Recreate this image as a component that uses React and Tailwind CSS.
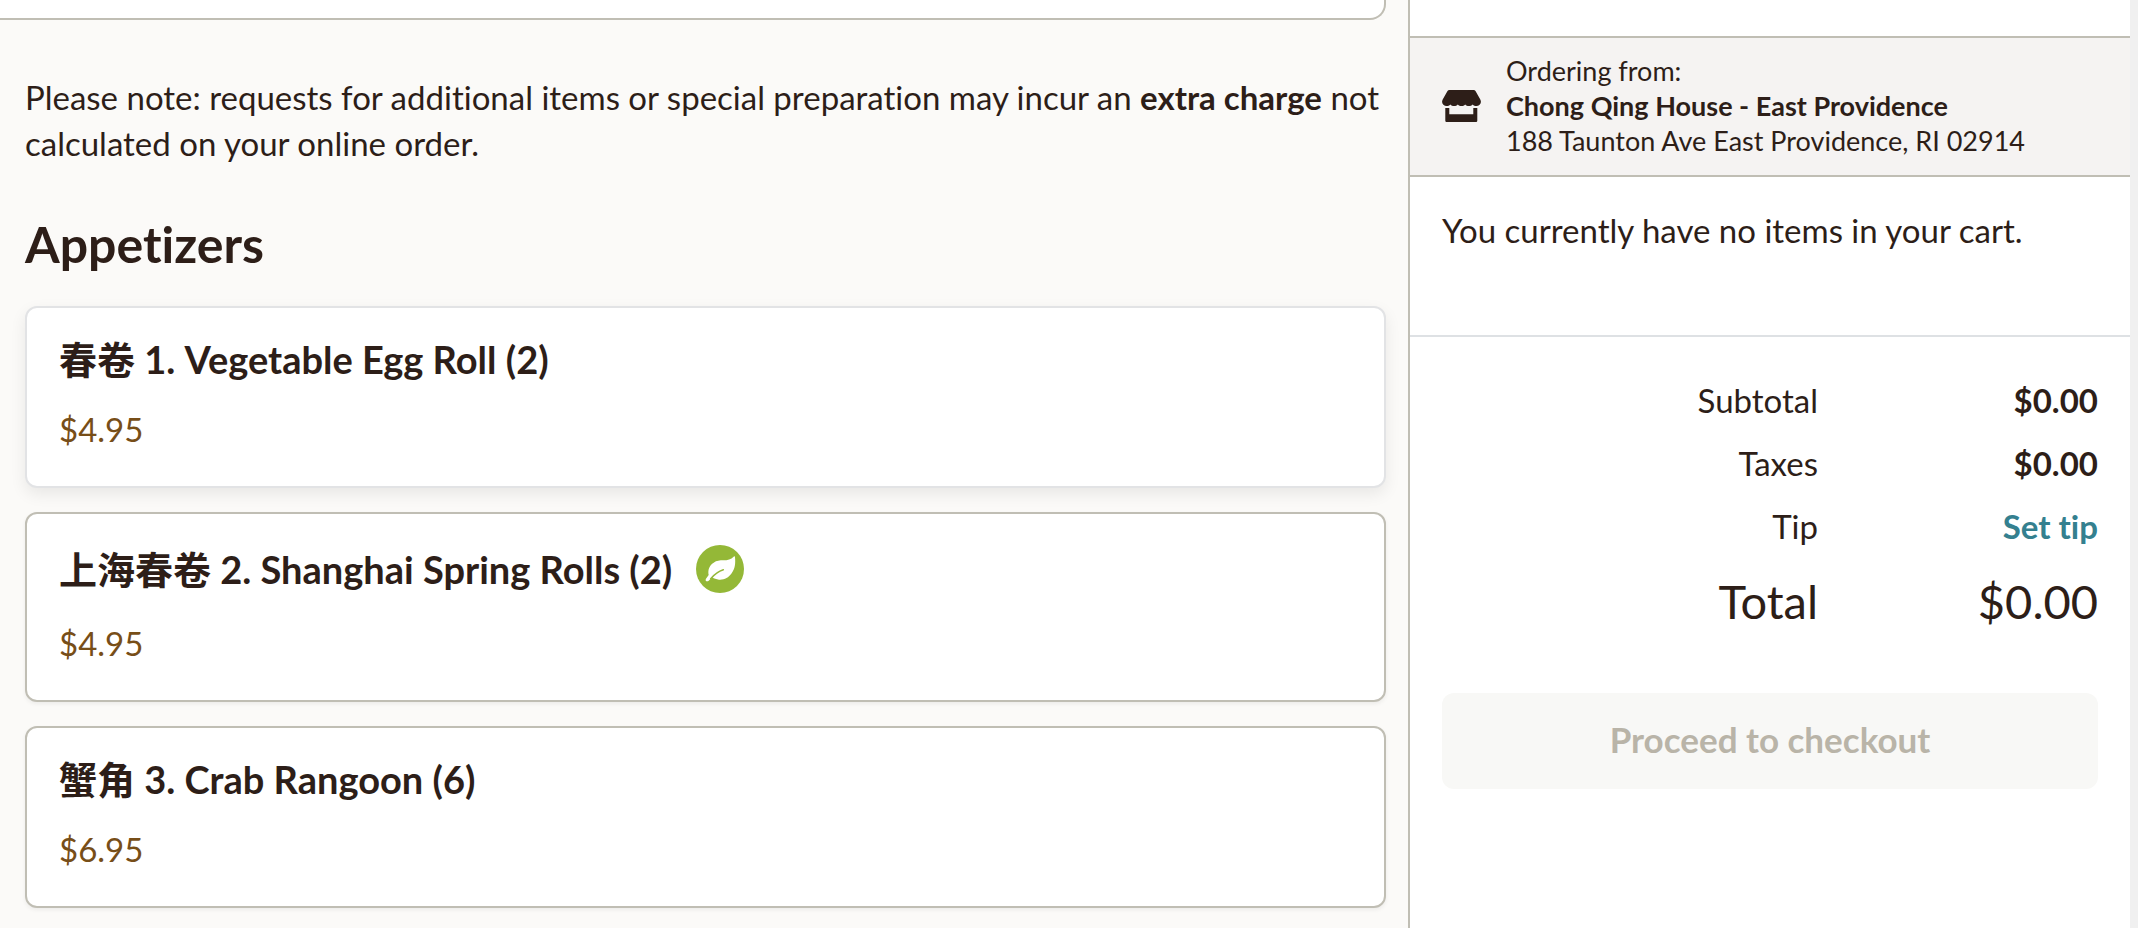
const items = [
  { name: "春卷 1. Vegetable Egg Roll (2)", price: "$4.95", active: true },
  { name: "上海春卷 2. Shanghai Spring Rolls (2)", price: "$4.95", vegetarian: true },
  { name: "蟹角 3. Crab Rangoon (6)", price: "$6.95" },
];

function StoreIcon() {
  return (
    <svg viewBox="0 0 39 32" className="h-8 w-[39px] shrink-0" fill="currentColor" aria-hidden="true">
      <path d="M7.4 0h24.200c.9 0 1.500.4 1.900 1.100l4.800 8.400c1.600 3-.1 6.100-3.300 6.400-1.900.1-3.300-.4-4.300-1.500-1.100 1.100-2.300 1.600-3.800 1.600s-2.700-.5-3.700-1.500c-1 1-2.200 1.500-3.700 1.500s-2.700-.5-3.700-1.500c-1 1-2.200 1.500-3.700 1.500s-2.700-.5-3.800-1.600c-1 1.100-2.400 1.600-4.300 1.500-3.200-.3-4.900-3.400-3.300-6.400l4.800-8.400C5.900.4 6.500 0 7.400 0z" />
      <path d="M3.300 18h4v6.300h24V18h4v12.400c0 1-.6 1.600-1.600 1.600H4.900c-1 0-1.600-.6-1.600-1.600z" />
    </svg>
  );
}

function LeafBadge() {
  return (
    <svg viewBox="0 0 144 144" className="my-[3px] size-12 shrink-0" role="img" aria-label="Vegetarian">
      <circle cx="72" cy="72" r="72" fill="#94b837" />
      <path
        d="M113 35c2-2 4-1 4 2 2 19 0 35-10 48-10 14-22 20-38 19-8-1-15-3-20-7l-11 10c-5 5-12 0-8-6l8-11c-3-16 2-29 15-37 9-6 18-7 29-7 13 0 23-3 31-11z"
        fill="#fff"
      />
      <path d="M44 101c11-13 22-22 38-27" fill="none" stroke="#94b837" strokeWidth="4.500" strokeLinecap="round" />
    </svg>
  );
}

function MenuItem({ item }) {
  const look = item.active
    ? "border-[#e2e3e5] shadow-[0_6px_16px_rgba(0,0,0,0.08)]"
    : "border-[#c0beb4] shadow-[0_2px_4px_rgba(0,0,0,0.06)]";
  return (
    <li>
      <button type="button" className={`block w-full rounded-xl border-2 bg-white px-8 pt-7 pb-[34px] text-left ${look}`}>
        <span className="flex items-center gap-6">
          <span className="text-[38px] leading-[46px] font-bold">{item.name}</span>
          {item.vegetarian && <LeafBadge />}
        </span>
        <span className="mt-6 block text-[33px] leading-[46px] text-[#774e18]">{item.price}</span>
      </button>
    </li>
  );
}

function Row({ label, children }) {
  return (
    <div className="grid grid-cols-[376px_1fr] text-right leading-[46px]">
      <dt>{label}</dt>
      <dd className="font-bold">{children}</dd>
    </div>
  );
}

export default function App() {
  return (
    <div className="flex min-h-screen bg-[#f0f0f0] pr-2 font-['Lato','Noto_Sans_CJK_SC',sans-serif] text-[33px] leading-[46px] text-[#2d1e18] [font-variant-ligatures:none]">
      <main className="min-w-0 flex-1 bg-[#fbfaf8] pr-[22px]">
        <div className="h-5 rounded-br-2xl border-r-2 border-b-2 border-[#c0beb4] bg-white" />
        <div className="pl-[25px]">
          <p className="mt-[54px]">
            Please note: requests for additional items or special preparation may incur an{" "}
            <strong className="font-bold">extra charge</strong> not calculated on your online order.
          </p>
          <h2 className="mt-[50px] text-[50px] leading-[56px] font-bold">Appetizers</h2>
          <ul className="mt-[34px] flex flex-col gap-6">
            {items.map((item) => (
              <MenuItem key={item.name} item={item} />
            ))}
          </ul>
        </div>
      </main>
      <aside className="w-[722px] shrink-0 border-l-2 border-[#c0beb4] bg-white pt-9">
        <section className="flex items-center gap-[25px] border-y-2 border-[#c0beb4] bg-[#f5f3f2] px-8 pt-[15px] pb-[17px] text-[27px] leading-[35px]">
          <StoreIcon />
          <p>
            Ordering from:
            <br />
            <strong className="font-bold">Chong Qing House - East Providence</strong>
            <br />
            188 Taunton Ave East Providence, RI 02914
          </p>
        </section>
        <p className="border-b-2 border-[#dee1e4] px-8 pt-[30px] pb-[82px]">You currently have no items in your cart.</p>
        <div className="px-8 pt-10">
          <dl className="flex flex-col gap-[17px]">
            <Row label="Subtotal">$0.00</Row>
            <Row label="Taxes">$0.00</Row>
            <Row label="Tip">
              <a href="#tip" className="text-[#34808f]">Set tip</a>
            </Row>
            <div className="grid grid-cols-[376px_1fr] text-right text-[47px] leading-[70px]">
              <dt>Total</dt>
              <dd>$0.00</dd>
            </div>
          </dl>
          <button type="button" disabled className="mt-[57px] h-24 w-full rounded-xl bg-[#f8f8f6] pb-1 text-[35px] font-bold text-[#b9b4a8]">
            Proceed to checkout
          </button>
        </div>
      </aside>
    </div>
  );
}
